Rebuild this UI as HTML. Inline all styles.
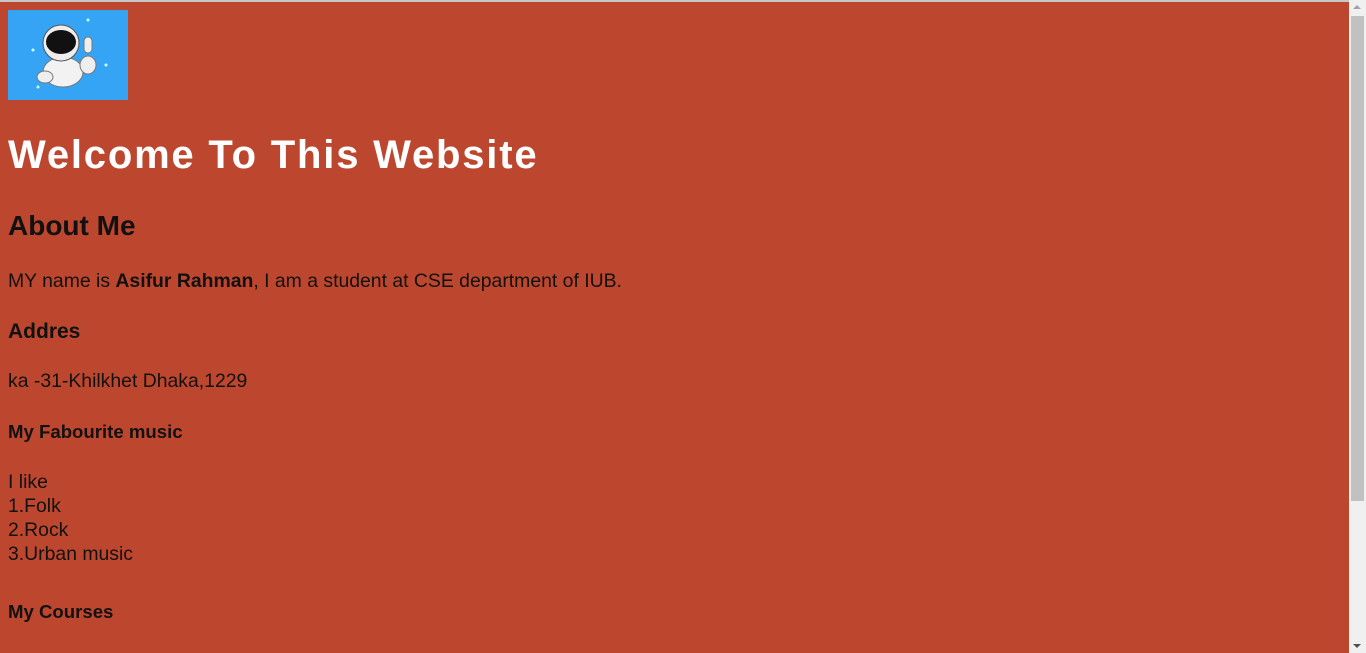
<!DOCTYPE html>
<html><head><meta charset="utf-8"><style>
html,body{margin:0;padding:0;}
body{width:1366px;height:653px;overflow:hidden;background:#bd472e;font-family:"Liberation Sans",sans-serif;position:relative;}
.top{position:absolute;left:0;top:0;width:1366px;height:2px;background:#c8c8c8;}
.sb{position:absolute;left:1349px;top:0;width:17px;height:653px;background:#f0f0f0;}
.thumb{position:absolute;left:1351px;top:16px;width:13px;height:485px;background:#c1c1c1;}
.t{position:absolute;left:8px;white-space:nowrap;color:#111;}
.img{position:absolute;left:8px;top:10px;width:120px;height:90px;background:#36a4f4;}
</style></head><body>
<div class="top"></div>
<div class="img">
<svg width="120" height="90" viewBox="0 0 120 90">
<circle cx="80" cy="10" r="1.5" fill="#cfe"/><circle cx="25" cy="40" r="1.5" fill="#cfe"/><circle cx="98" cy="55" r="1.5" fill="#cfe"/><circle cx="30" cy="77" r="1.5" fill="#cfe"/>
<ellipse cx="55" cy="62" rx="20" ry="15" fill="#f2f2f2" stroke="#777"/>
<ellipse cx="80" cy="55" rx="8" ry="9" fill="#eee" stroke="#777"/>
<ellipse cx="37" cy="67" rx="8" ry="6" fill="#eee" stroke="#777"/>
<circle cx="53" cy="33" r="18" fill="#eee" stroke="#555"/>
<ellipse cx="53" cy="32" rx="15" ry="12" fill="#111"/>
<rect x="76" y="27" width="8" height="16" rx="4" fill="#eee" stroke="#777"/>
</svg></div>
<div class="t" style="top:133px;font-size:40px;font-weight:bold;color:#fff;letter-spacing:1.8px;">Welcome To This Website</div>
<div class="t" style="top:210px;font-size:28px;font-weight:bold;">About Me</div>
<div class="t" style="top:270px;font-size:19.4px;">MY name is <b>Asifur Rahman</b>, I am a student at CSE department of IUB.</div>
<div class="t" style="top:320px;font-size:21px;font-weight:bold;">Addres</div>
<div class="t" style="top:370px;font-size:19.4px;">ka -31-Khilkhet Dhaka,1229</div>
<div class="t" style="top:421px;font-size:18.6px;font-weight:bold;">My Fabourite music</div>
<div class="t" style="top:470px;font-size:19.4px;line-height:24px;">I like<br>1.Folk<br>2.Rock<br>3.Urban music</div>
<div class="t" style="top:601px;font-size:18.6px;font-weight:bold;">My Courses</div>
<div class="sb"></div><div class="thumb"></div>
<div style="position:absolute;left:1353px;top:5px;width:0;height:0;border-left:4px solid transparent;border-right:4px solid transparent;border-bottom:4px solid #a3a3a3;"></div>
<div style="position:absolute;left:1353px;top:644px;width:0;height:0;border-left:4px solid transparent;border-right:4px solid transparent;border-top:4px solid #505050;"></div>
</body></html>
